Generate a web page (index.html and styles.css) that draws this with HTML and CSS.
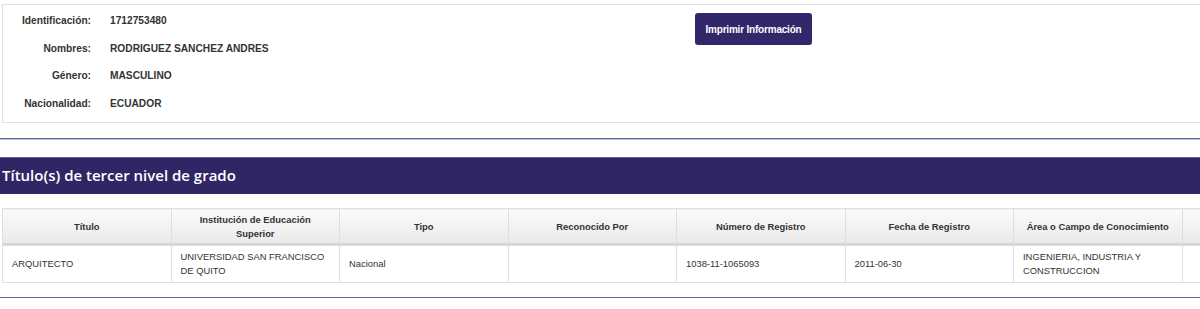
FILE: index.html
```html
<!DOCTYPE html>
<html lang="es">
<head>
    <meta charset="UTF-8">
    <meta name="viewport" content="width=device-width, initial-scale=1.0">
    <title>Consulta de títulos</title>
    <link rel="stylesheet" href="styles.css">
</head>
<body>
    <div class="ficha">
        <div class="datos">
            <div class="fila"><span class="etiqueta">Identificación:</span><span class="valor">1712753480</span></div>
            <div class="fila"><span class="etiqueta">Nombres:</span><span class="valor">RODRIGUEZ SANCHEZ ANDRES</span></div>
            <div class="fila"><span class="etiqueta">Género:</span><span class="valor">MASCULINO</span></div>
            <div class="fila"><span class="etiqueta">Nacionalidad:</span><span class="valor">ECUADOR</span></div>
        </div>
        <div class="acciones">
            <button type="button" class="btn-imprimir">Imprimir Información</button>
        </div>
    </div>

    <hr class="separador">

    <h2 class="titulo-seccion">Título(s) de tercer nivel de grado</h2>

    <div class="tabla-wrap">
        <table class="tabla">
            <thead>
                <tr>
                    <th>Título</th>
                    <th>Institución de Educación Superior</th>
                    <th>Tipo</th>
                    <th>Reconocido Por</th>
                    <th>Número de Registro</th>
                    <th>Fecha de Registro</th>
                    <th>Área o Campo de Conocimiento</th>
                    <th></th>
                </tr>
            </thead>
            <tbody>
                <tr>
                    <td>ARQUITECTO</td>
                    <td>UNIVERSIDAD SAN FRANCISCO DE QUITO</td>
                    <td>Nacional</td>
                    <td></td>
                    <td>1038-11-1065093</td>
                    <td>2011-06-30</td>
                    <td>INGENIERIA, INDUSTRIA Y CONSTRUCCION</td>
                    <td></td>
                </tr>
            </tbody>
        </table>
    </div>

    <hr class="separador separador-fin">
</body>
</html>
```

FILE: styles.css
```css
body { margin: 0; font-family: "Liberation Sans", Arial, sans-serif; font-size: 10.2px; color: #333; overflow: hidden; }

/* datos personales */
.ficha { margin: 4px 0 0 2px; border: 1px solid #e0e0e0; border-right: 0; display: grid; grid-template-columns: 692px auto; }
.datos { padding: 2px 0 5px; }
.fila { display: grid; grid-template-columns: 88px auto; column-gap: 19px; height: 27.5px; align-items: center; font-weight: bold; }
.etiqueta { text-align: right; }
.acciones { padding-top: 8px; }
.btn-imprimir { width: 117px; height: 32px; padding: 0; border: 0; border-radius: 3px; background: #31276a; color: #fff; font-family: "Liberation Sans", Arial, sans-serif; font-size: 10px; font-weight: bold; letter-spacing: -0.2px; }

.separador { margin: 15px 0 0; height: 0; border: 0; border-top: 1px solid #566b96; box-shadow: 0 1px 0 #b9c4d8; }
.separador-fin { margin-top: 14px; }

.titulo-seccion { margin: 18px 0 0; height: 37px; padding-left: 2px; border-top: 1px solid #56629a; box-sizing: border-box; background: #312665; color: #fff; font-family: "Open Sans", sans-serif; font-size: 15px; font-weight: 600; line-height: 35px; }

/* tabla de títulos */
.tabla-wrap { margin: 14px 0 0 2px; overflow: hidden; }
.tabla { width: 1349px; table-layout: fixed; border-collapse: collapse; font-size: 9.4px; }
.tabla th, .tabla td { border: 1px solid #dedede; line-height: 14px; }
.tabla th { height: 36px; padding: 0 10px; background: linear-gradient(#fbfbfb, #e9e9e9); box-shadow: inset 0 -2px 0 #d6d6d6; font-weight: bold; text-align: center; }
.tabla td { height: 36px; padding: 0 4px 0 9px; text-align: left; }
```
